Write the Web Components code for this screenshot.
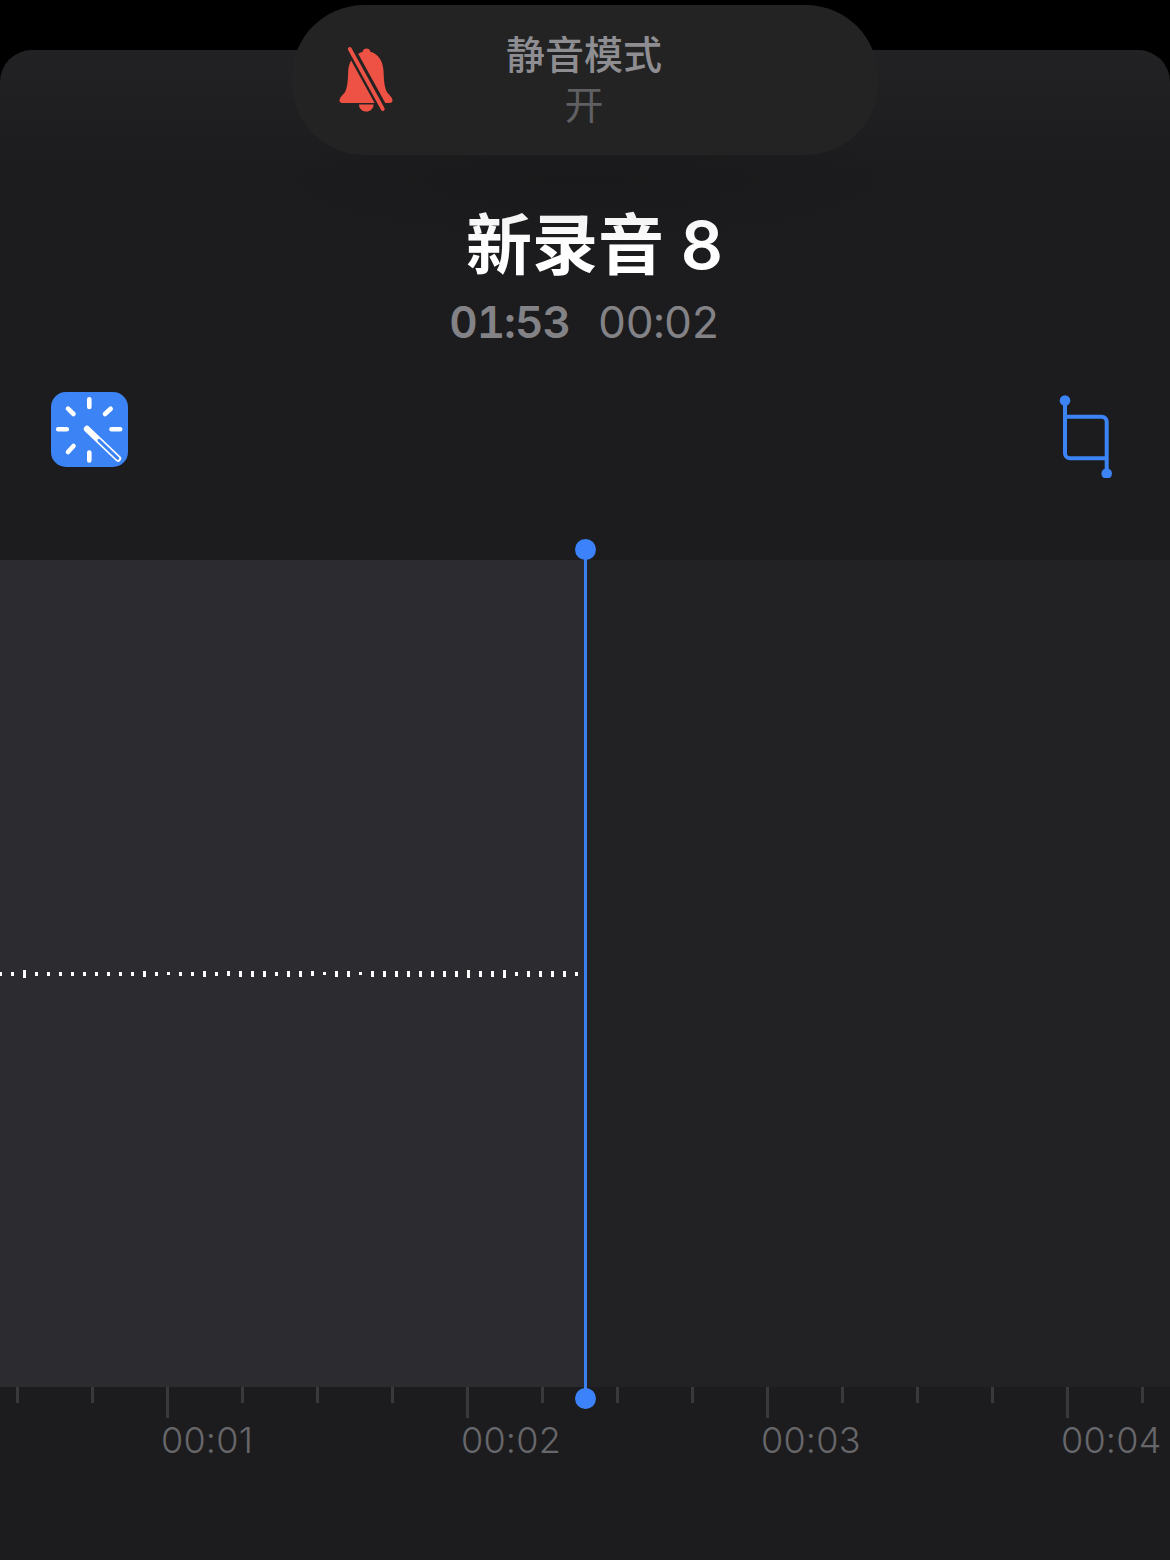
<!DOCTYPE html>
<html lang="zh">
<head>
<meta charset="utf-8">
<style>
html,body{margin:0;padding:0;background:#000;}
body{width:1170px;height:1560px;overflow:hidden;font-family:"Inter","Noto Sans CJK SC",sans-serif;}
</style>
</head>
<body>
<memo-sheet>
  <silent-pill slot="pill" title-text="静音模式" state="开"></silent-pill>
  <memo-title slot="title" name="新录音 8" total="01:53" current="00:02"></memo-title>
  <memo-tools slot="tools"></memo-tools>
  <memo-wave slot="wave"></memo-wave>
  <memo-ruler slot="ruler"></memo-ruler>
</memo-sheet>
<script>
function def(name, css, html){
  customElements.define(name, class extends HTMLElement{
    connectedCallback(){
      if(this.shadowRoot) return;
      const r=this.attachShadow({mode:'open'});
      r.innerHTML='<style>'+css+'</style>'+(typeof html==='function'?html(this):html);
    }
  });
}
def('memo-sheet',`
:host{display:block;position:relative;width:1170px;height:1560px;background:#000;}
.sheet{position:absolute;left:0;right:0;top:50px;bottom:0;border-radius:32px 32px 0 0;
 background:linear-gradient(#222224 0,#1c1c1e 120px);display:flex;flex-direction:column;padding-top:150px;box-sizing:border-box;}
.pill{position:absolute;left:292px;top:5px;z-index:2;}
.halo{position:absolute;left:232px;top:60px;width:706px;height:140px;background:radial-gradient(closest-side,rgba(0,0,0,.10),rgba(0,0,0,0));}
`,`<div class="sheet"><div class="halo"></div><slot name="title"></slot><slot name="tools"></slot><slot name="wave"></slot><slot name="ruler"></slot></div><div class="pill"><slot name="pill"></slot></div>`);

def('silent-pill',`
:host{display:block;width:586px;height:150px;}
.p{box-sizing:border-box;width:100%;height:100%;border-radius:72px;background:#232323;position:relative;display:flex;flex-direction:column;align-items:center;justify-content:flex-start;padding:22px 2px 0 0;font-family:"Noto Sans CJK SC",sans-serif;}
svg{position:absolute;left:43px;top:39px;}
.a{font-size:39px;line-height:50px;font-weight:500;color:#8e8e92;}
.b{font-size:39px;line-height:50px;font-weight:400;color:#606063;}
`,h=>`<div class="p"><svg width="62" height="70" viewBox="0 0 62 70">
<path fill="#ee5244" d="M31.500 4.500c2 0 3.500 1.200 3.800 3.200C44 10 48.300 18 48.600 28c.3 9.500 1 16 3.600 20.500 2 2.500 5 4.700 5.300 7.500.2 1.800-1 3-3 3H7.500c-2 0-3.200-1.200-3-3 .3-2.800 3.300-5 5.300-7.500 2.400-4.500 3.100-11 3.400-20.500.1-3.600.7-6.800 1.900-9.600 2.600-5.200 7-9 12.600-10.700.3-2 1.800-3.200 3.800-3.200z"/>
<path fill="#ee5244" d="M24 60.500h14.500c0 4.300-3.200 7-7.250 7S24 64.800 24 60.500z"/>
<path stroke="#232323" stroke-width="9.400" stroke-linecap="butt" d="M13 1 51 70"/>
<path stroke="#ee5244" stroke-width="3.800" stroke-linecap="round" d="M14.800 5 47.800 65"/>
</svg><div class="a">${h.getAttribute('title-text')}</div><div class="b">${h.getAttribute('state')}</div></div>`);

def('memo-title',`
:host{display:block;height:192px;text-align:center;}
.t{font-family:"Inter","Noto Sans CJK SC",sans-serif;font-size:66px;line-height:90px;font-weight:600;color:#fff;margin-top:-5px;padding-left:19px;white-space:pre;}
.t span{font-family:"Noto Sans CJK SC",sans-serif;font-weight:700;}
.s{margin-top:5px;font-size:44px;line-height:54px;color:#838387;display:flex;justify-content:center;gap:28px;font-variant-numeric:tabular-nums;letter-spacing:-1px;padding-right:2px;}
.s b{font-weight:600;}
.s i{font-style:normal;font-weight:400;}
`,h=>{const n=h.getAttribute('name').split(' ');return `<div class="t"><span>${n[0]}</span> ${n[1]}</div><div class="s"><b>${h.getAttribute('total')}</b><i>${h.getAttribute('current')}</i></div>`;});

def('memo-tools',`
:host{display:block;height:168px;}
.r{display:flex;justify-content:space-between;padding:0 52px 0 51px;}
svg{display:block;}
`,`<div class="r"><svg width="77" height="75" viewBox="0 0 77 75">
<rect width="77" height="75" rx="15" fill="#3c83f6"/>
<g stroke="#fff" stroke-width="4.600" stroke-linecap="round" fill="none">
<path d="M38.300 7.200V15M38.300 60.500V68.500M7.200 37.300H15.800M60.500 37.300H69.200M17 16.700l5.500 5.300M59.700 16.700 54 22M22.500 54 17 60"/>
</g>
<path d="M36 37 67 66.500" stroke="#fff" stroke-width="6.400" stroke-linecap="round" fill="none"/>
<path d="M48 48.400 66.800 66.300" stroke="#3c83f6" stroke-width="3" stroke-linecap="round" fill="none"/>
</svg>
<svg width="60" height="86" viewBox="0 0 60 86">
<g fill="none" stroke="#3c83f6" stroke-width="4">
<path d="M7 8V61.300a5 5 0 0 0 5 5H48.700"/>
<path d="M7 24.700H43.700a5 5 0 0 1 5 5V82"/>
</g>
<circle cx="7" cy="8.500" r="5.300" fill="#3c83f6"/><circle cx="48.700" cy="81.500" r="5.300" fill="#3c83f6"/>
</svg></div>`);

const H=[4,4,8,4,4,4,4,4,4,4,4,4,6,4,3,4,4,6,4,5,6,6,6,4,6,6,5,3,6,6,3,6,6,6,6,6,6,6,6,8,6,6,8,4,6,6,6,6,4];
def('memo-wave',`
:host{display:block;position:relative;height:827px;background:#222224;}
.past{width:585px;height:100%;background:#2c2c30;display:flex;align-items:center;gap:9px;overflow:hidden;}
.past i{flex:none;width:3px;background:#fff;}
.past i:first-child{margin-left:-1px;}
.head{position:absolute;left:575px;top:-21px;width:21px;height:870px;}
.head::before{content:"";position:absolute;left:9px;top:10px;bottom:10px;width:3px;background:#3a80ee;}
.head b{position:absolute;left:0;width:21px;height:21px;border-radius:50%;background:#3c83fb;}
`,()=>`<div class="past">${H.map(h=>`<i style="height:${h}px"></i>`).join('')}</div><div class="head"><b style="top:0"></b><b style="bottom:0"></b></div>`);

def('memo-ruler',`
:host{display:block;}
.ticks{display:grid;grid-template-columns:repeat(15,75px) 3px;height:31px;margin-left:16px;}
.ticks i{width:3px;height:16px;background:#39393b;}
.ticks i.l{height:31px;}
.labs{display:flex;margin-left:161px;margin-top:0;}
.labs span{flex:none;font-family:"Inter",sans-serif;font-weight:300;font-size:36px;letter-spacing:.2px;line-height:44px;color:#67676b;}
.labs span:not(:last-child){width:300px;}
`,()=>{let t='';for(let i=0;i<16;i++){t+=`<i class="${i%4===2?'l':''}"></i>`;}
return `<div class="ticks">${t}</div><div class="labs"><span>00:01</span><span>00:02</span><span>00:03</span><span>00:04</span></div>`;});
</script>
</body>
</html>
